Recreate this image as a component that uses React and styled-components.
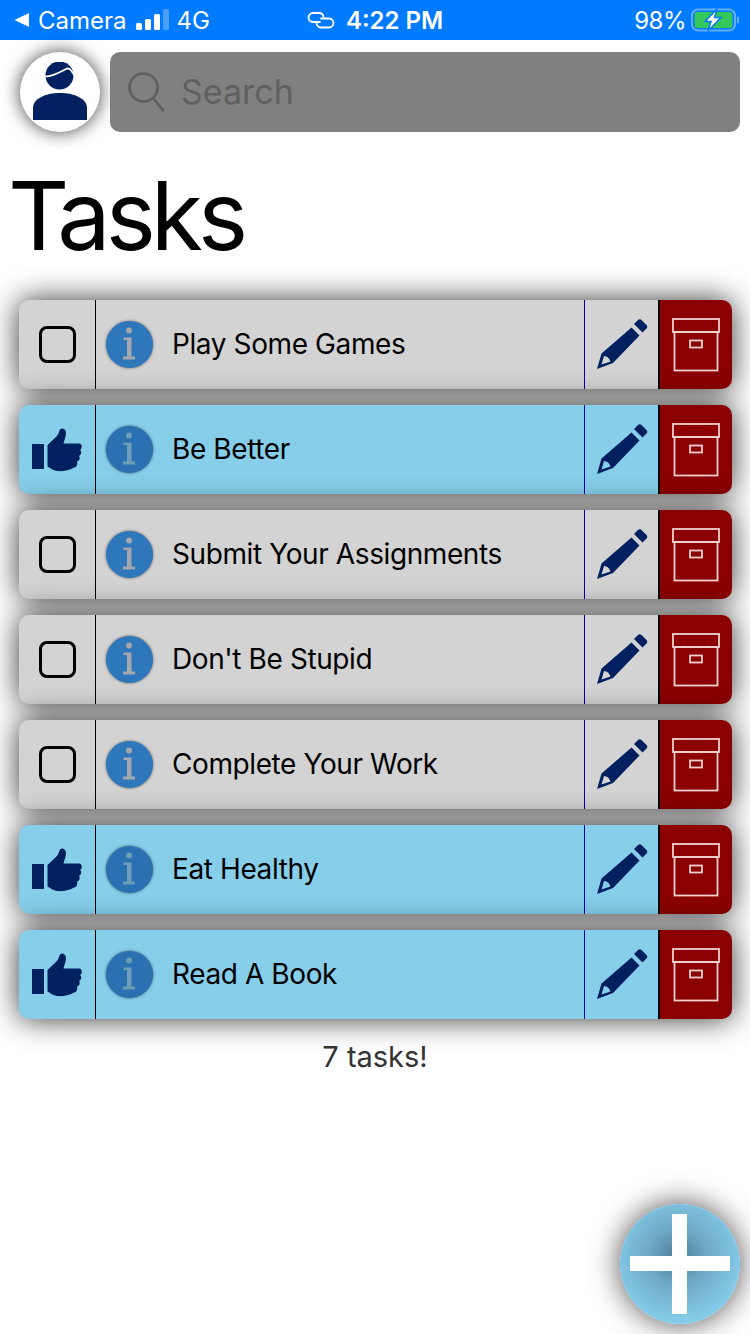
import React from "react";
import styled, { createGlobalStyle } from "styled-components";

const GlobalStyle = createGlobalStyle`
  html, body {
    margin: 0;
    padding: 0;
    background: #fff;
    font-family: "Inter", "Liberation Sans", sans-serif;
  }
`;

const tasks = [
  { id: 1, name: "Play Some Games", done: false },
  { id: 2, name: "Be Better", done: true },
  { id: 3, name: "Submit Your Assignments", done: false },
  { id: 4, name: "Don't Be Stupid", done: false },
  { id: 5, name: "Complete Your Work", done: false },
  { id: 6, name: "Eat Healthy", done: true },
  { id: 7, name: "Read A Book", done: true },
];

const NAVY = "#002060";

function BackArrow() {
  return (
    <svg width="16" height="16" viewBox="0 0 16 16">
      <path d="M0.5 8 L15 1 V15 Z" fill="#fff" />
    </svg>
  );
}

function Signal() {
  return (
    <svg width="34" height="24" viewBox="0 0 34 24">
      <rect x="1" y="15" width="6" height="7" rx="1.5" fill="#fff" />
      <rect x="10" y="11" width="6" height="11" rx="1.5" fill="#fff" />
      <rect x="19" y="6" width="6" height="16" rx="1.5" fill="#fff" />
      <rect x="28" y="1" width="6" height="21" rx="1.5" fill="#4d9fff" />
    </svg>
  );
}

function LinkIcon() {
  return (
    <svg width="28" height="17" viewBox="0 0 28 17" fill="none" stroke="#fff" strokeWidth="1.8" strokeLinecap="round">
      <path d="M13 10 H6 a4.500 4.500 0 0 1 0 -9 H12 a4.500 4.500 0 0 1 4.500 4" />
      <path d="M14 6.500 H22 a4.500 4.500 0 0 1 0 9 H14 a4.500 4.500 0 0 1 -4.500 -4.500" />
    </svg>
  );
}

function Battery() {
  return (
    <svg width="48" height="24" viewBox="0 0 48 24">
      <rect x="1" y="1.500" width="43" height="21" rx="6" fill="none" stroke="#66adff" strokeWidth="2" />
      <path d="M46 8.500 a3.500 3.500 0 0 1 0 7 Z" fill="#66adff" />
      <rect x="3.500" y="4" width="38" height="16" rx="3" fill="#34c759" />
      <path d="M26 1 L14 13.500 H20 L17 23 L30 9.500 H23.500 Z" fill="#fff" stroke="#007aff" strokeWidth="1.500" />
    </svg>
  );
}

function PersonIcon() {
  return (
    <svg width="54" height="58" viewBox="0 0 54 58">
      <circle cx="26.500" cy="13.500" r="14" fill={NAVY} />
      <path d="M11 14.500 C20 15 27 10 33 7 C36 5.500 37 6.500 42 14" fill="none" stroke="#fff" strokeWidth="1.800" />
      <path d="M0 58 V46 C0 37 12 31 27 31 C42 31 54 37 54 46 V58 Z" fill={NAVY} />
    </svg>
  );
}

function SearchIcon() {
  return (
    <svg width="38" height="42" viewBox="0 0 38 42" fill="none" stroke="#5f5f5f" strokeWidth="2.600" strokeLinecap="round">
      <circle cx="15.500" cy="16.500" r="14" />
      <path d="M26 28 L35 39.500" />
    </svg>
  );
}

function ThumbIcon() {
  return (
    <svg width="52" height="44" viewBox="0 0 52 44" fill={NAVY}>
      <rect x="1" y="16" width="12" height="25" />
      <path d="M16.500 17 L26 8 C28 5 28 3 29 1.500 C31 -0.500 35 1 35 5 C35 9 33 13 32.500 15.500 L48 15.500 C51.500 15.500 51.500 21 49 22 C51 23.500 50.500 27 48 28 C49.500 30 48.500 33 46 33.500 C47 36 45.500 39.500 43 39.500 C38 43 30 43.500 26 43 C22 42.500 19.500 40 16.500 38.500 Z" />
    </svg>
  );
}

function PencilIcon() {
  return (
    <svg width="52" height="52" viewBox="0 0 52 52" fill={NAVY}>
      <path d="M38 5 L42 1 C43 0 44.500 0 45.500 1 L50.500 6 C51.500 7 51.500 8.500 50.500 9.500 L46.500 13.500 Z" />
      <path fillRule="evenodd" d="M35.500 8.500 L43.500 16.500 L17 44 L1 50 L5.500 34.500 Z M8 37 L5.500 45.500 L14.500 42.500 C13 38.500 11.500 37.500 8 37 Z" />
    </svg>
  );
}

function ArchiveIcon() {
  return (
    <svg width="48" height="54" viewBox="0 0 48 54" fill="none" stroke="#f0d0d0" strokeWidth="1.800">
      <rect x="1" y="1" width="46" height="13" />
      <rect x="2.500" y="14" width="43" height="38.500" />
      <rect x="18" y="22.500" width="12" height="7" />
    </svg>
  );
}

function InfoGlyph({ color }) {
  return (
    <svg width="14" height="36" viewBox="0 0 14 36" fill={color}>
      <circle cx="7" cy="4.500" r="3" />
      <path d="M1.500 11.500 H9.500 V30.500 H13 V33.500 H1 V30.500 H5 V14 H1.500 Z" />
    </svg>
  );
}

export default function App() {
  return (
    <>
      <GlobalStyle />
      <Page>
        <StatusBar>
          <StatusLeft>
            <BackArrow />
            <span>Camera</span>
            <Signal />
            <span>4G</span>
          </StatusLeft>
          <StatusCenter>
            <LinkIcon />
            <strong>4:22 PM</strong>
          </StatusCenter>
          <StatusRight>
            <span>98%</span>
            <Battery />
          </StatusRight>
        </StatusBar>

        <SearchRow>
          <Avatar>
            <PersonIcon />
          </Avatar>
          <SearchBox>
            <SearchIcon />
            <SearchText>Search</SearchText>
          </SearchBox>
        </SearchRow>

        <Title>Tasks</Title>

        <TaskList>
          {tasks.map((task) => (
            <TaskRow key={task.id} $done={task.done}>
              <CheckCell>{task.done ? <ThumbIcon /> : <EmptyBox />}</CheckCell>
              <InfoCell>
                <InfoBadge $done={task.done}>
                  <InfoGlyph color={task.done ? "#6c9eb8" : "#a3a9ae"} />
                </InfoBadge>
              </InfoCell>
              <TaskName>{task.name}</TaskName>
              <EditCell>
                <PencilIcon />
              </EditCell>
              <ArchiveCell>
                <ArchiveIcon />
              </ArchiveCell>
            </TaskRow>
          ))}
        </TaskList>

        <TaskCount>7 tasks!</TaskCount>

        <AddButton>
          <PlusBar />
          <PlusBar $vertical />
        </AddButton>
      </Page>
    </>
  );
}

const Page = styled.div`
  position: relative;
  width: 750px;
  height: 1334px;
  overflow: hidden;
  background: #fff;
`;

const StatusBar = styled.div`
  height: 40px;
  background: #007aff;
  color: #fff;
  font-size: 24px;
  display: grid;
  grid-template-columns: 1fr auto 1fr;
  align-items: center;
  padding: 0 11px 0 14px;
`;

const StatusLeft = styled.div`
  display: flex;
  align-items: center;
  gap: 8px;
`;

const StatusCenter = styled.div`
  display: flex;
  align-items: center;
  gap: 11px;
  padding-right: 3px;
  strong {
    font-weight: 600;
  }
`;

const StatusRight = styled.div`
  display: flex;
  align-items: center;
  justify-content: flex-end;
  gap: 5px;
  letter-spacing: -0.5px;
`;

const SearchRow = styled.div`
  display: flex;
  gap: 10px;
  padding: 12px 10px 0 20px;
`;

const Avatar = styled.div`
  width: 80px;
  height: 80px;
  flex: none;
  box-sizing: border-box;
  padding-bottom: 2px;
  border-radius: 50%;
  background: #fff;
  box-shadow: 0 0 18px rgba(0, 0, 0, 0.75);
  display: flex;
  align-items: center;
  justify-content: center;
`;

const SearchBox = styled.div`
  flex: 1;
  height: 80px;
  border-radius: 10px;
  background: #808080;
  display: flex;
  align-items: center;
  gap: 15px;
  padding-left: 18px;
`;

const SearchText = styled.div`
  font-size: 34px;
  color: #606060;
  padding-bottom: 2px;
`;

const Title = styled.h1`
  margin: 26px 0 0 8px;
  font-size: 95px;
  line-height: 116px;
  font-weight: 400;
  color: #000;
  letter-spacing: -5px;
`;

const TaskList = styled.div`
  margin: 26px 18px 0 19px;
  display: flex;
  flex-direction: column;
  gap: 16px;
`;

const TaskRow = styled.div`
  height: 89px;
  display: flex;
  align-items: stretch;
  border-radius: 10px;
  background: ${(p) => (p.$done ? "#87ceeb" : "#d3d3d3")};
  box-shadow: 0 0 30px rgba(0, 0, 0, 0.8);
`;

const CheckCell = styled.div`
  width: 77px;
  flex: none;
  box-sizing: border-box;
  border-right: 1px solid #000;
  display: flex;
  align-items: center;
  justify-content: center;
`;

const EmptyBox = styled.div`
  width: 37px;
  height: 37px;
  box-sizing: border-box;
  border: 3px solid #000;
  border-radius: 8px;
  margin: 0 0 1px 1px;
`;

const InfoCell = styled.div`
  width: 76px;
  flex: none;
  box-sizing: border-box;
  padding: 0 10px 1px 0;
  display: flex;
  align-items: center;
  justify-content: center;
`;

const InfoBadge = styled.div`
  width: 47px;
  height: 47px;
  border-radius: 50%;
  background: ${(p) => (p.$done ? "#2b70b0" : "#2e77bb")};
  box-shadow: 0 0 3px rgba(0, 0, 0, 0.55);
  display: flex;
  align-items: center;
  justify-content: center;
`;

const TaskName = styled.div`
  flex: 1;
  display: flex;
  align-items: center;
  padding-bottom: 1px;
  font-size: 28px;
  letter-spacing: -0.4px;
  color: #000;
`;

const EditCell = styled.div`
  width: 74px;
  flex: none;
  box-sizing: border-box;
  border-left: 1px solid #0000b0;
  display: flex;
  align-items: center;
  justify-content: center;
`;

const ArchiveCell = styled.div`
  width: 74px;
  flex: none;
  box-sizing: border-box;
  border-left: 2px solid #000;
  border-radius: 0 10px 10px 0;
  background: #8b0000;
  display: flex;
  align-items: center;
  justify-content: center;
`;

const TaskCount = styled.div`
  margin-top: 20px;
  text-align: center;
  font-size: 29px;
  line-height: 36px;
  color: #333;
`;

const AddButton = styled.div`
  position: absolute;
  left: 620px;
  top: 1204px;
  width: 120px;
  height: 120px;
  border-radius: 50%;
  background: radial-gradient(circle at 48% 44%, #4c7b95 0%, #6ea9c7 32%, #87ceeb 74%);
  box-shadow: 0 0 30px rgba(0, 0, 0, 0.7);
`;

const PlusBar = styled.div`
  position: absolute;
  background: #fff;
  ${(p) =>
    p.$vertical
      ? "left: 52px; top: 10px; width: 15px; height: 100px;"
      : "left: 10px; top: 52px; width: 100px; height: 15px;"}
`;
